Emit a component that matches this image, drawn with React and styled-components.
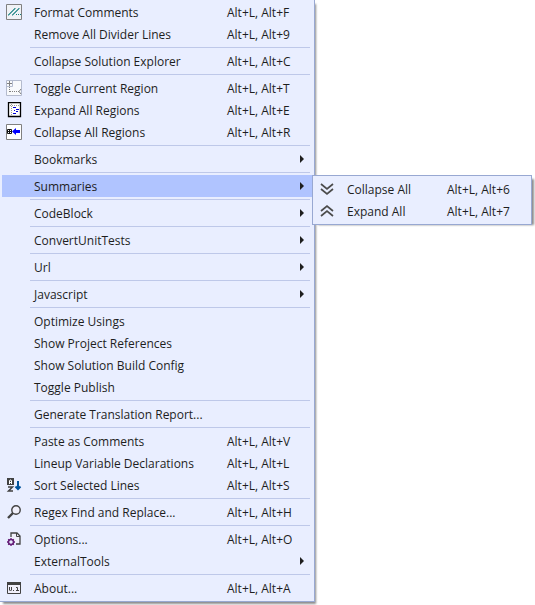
import React from "react";
import styled, { createGlobalStyle } from "styled-components";

const GlobalStyle = createGlobalStyle`
  * { box-sizing: border-box; }
  body {
    margin: 0;
    background: #fff;
    color: #1e1e1e;
    font: 12px/20px "Open Sans", "Noto Sans", sans-serif;
  }
`;

const Page = styled.main`
  display: flex;
  align-items: flex-start;
  min-height: 100vh;
`;

const Menu = styled.ul`
  display: grid;
  grid-template-columns: 34px minmax(193px, auto) 87px;
  margin: 0;
  padding: 1px 0 2px;
  list-style: none;
  background: #e9eeff;
  border: solid #98a8d2;
  border-width: 0 1px 1px 0;
  box-shadow: 2px 3px 2px -1px rgba(0, 0, 0, 0.45);
`;

const Submenu = styled(Menu)`
  position: absolute;
  z-index: 1;
  top: 0;
  left: calc(100% - 2px);
  grid-template-columns: 34px minmax(100px, auto) 84px;
  padding: 2px 0;
  border-width: 1px;
  box-shadow: 4px 2px 2px -2px rgba(0, 0, 0, 0.45);
`;

const Item = styled.li`
  position: relative;
  display: grid;
  grid-column: 1 / -1;
  grid-template-columns: subgrid;
`;

const Command = styled.button`
  display: grid;
  grid-column: 1 / -1;
  grid-template-columns: subgrid;
  align-items: center;
  height: 22px;
  padding: 0;
  border: 0;
  margin: 0 0 0 2px;
  background: ${(p) => (p.$active ? "#b0c4ff" : "transparent")};
  color: inherit;
  font: inherit;
  text-align: left;
  white-space: nowrap;
  cursor: default;

  &:hover { background: #b0c4ff; }
`;

const IconSlot = styled.span`
  display: flex;
  padding-left: 4px;
`;

const Label = styled.span`
  padding-top: 2px;
`;

const Arrow = styled.span`
  justify-self: end;
  margin-right: 10px;
  border: solid transparent;
  border-width: 4px 0 4px 4px;
  border-left-color: #1e1e1e;
`;

const Divider = styled.li`
  grid-column: 1 / -1;
  height: 1px;
  margin: 2px 4px 2px 30px;
  background: #bec8e9;
`;

const Drawing = styled.svg`
  display: block;
  width: 16px;
  height: 16px;
  fill: none;
`;

const drawings = {
  comments: (
    <>
      <path d="M.5.5h15v15H.5z" fill="#f0f2f6" stroke="#808080" />
      <path d="M2 11h1v-1h1V9h1V8h1V7h1V6h1V5h1V4M6 11h1v-1h1V9h1V8h1V7h1V6h1V5h1V4" stroke="#168080" />
      <path d="M10 10.500h1m1 0h1m1 0h1" stroke="#168080" />
    </>
  ),
  toggle: (
    <>
      <path d="M.5.5h15v15H.5z" fill="#f8f9fc" stroke="#b4bbce" />
      <path d="M1 6.500h5.500V1" stroke="#b4bbce" />
      <path d="M3.500 1v5M1 3.500h5" stroke="#808080" />
      <path d="M3.500 7v5M4 11.500h9" stroke="#808080" strokeDasharray="1 1" />
      <path d="M15 9l-2 2.500 2 2.500" stroke="#808080" />
    </>
  ),
  expand: (
    <>
      <path d="M2.500.5h12v14h-12z" fill="#fff" stroke="#000" strokeWidth="1.300" />
      <path d="M5.500 2v11M4 3.500h9" stroke="#999" strokeDasharray="1 1" />
      <path d="M7 5.500h3M10 7.500h3M8 8.500h1M10 9.500h2M7 11.500h3" stroke="#0000d8" />
    </>
  ),
  collapse: (
    <>
      <path d="M.5.5h15v15H.5z" fill="#fff" stroke="#808080" />
      <path d="M1.500 5.500h4v4h-4zM3.500 6v3M2 7.500h3" stroke="#111" />
      <path d="M6 7.500 10 4v2h4v3h-4v2z" fill="#00f" />
    </>
  ),
  sort: (
    <>
      <path d="M1 1h7v7H1z" fill="#424242" />
      <path d="M3.500 7V4L4 3h1l.5 1v3M3.500 5.500h2" stroke="#fff" />
      <path d="M2 10h4.500L2.500 14H7" stroke="#424242" strokeWidth="1.500" />
      <path d="M12 4v8M9.500 9.500 12 12l2.500-2.500" stroke="#00539c" strokeWidth="2" />
    </>
  ),
  search: (
    <>
      <circle cx="10" cy="6" r="4.200" fill="#f0effa" stroke="#424242" strokeWidth="1.400" />
      <path d="M7 9 2 14" stroke="#424242" strokeWidth="2.400" />
    </>
  ),
  options: (
    <>
      <path d="M5 6V2h6l3 3v8h-4" fill="#f0effa" stroke="#424242" strokeWidth="1.300" />
      <path d="M10.500 2v3.500H14" stroke="#424242" />
      <circle cx="5" cy="11" r="2.500" fill="#e9eeff" stroke="#68217a" strokeWidth="1.500" />
      <path d="M5 7v2M5 13v2M1 11h2M7 11h2M2.200 8.200l1.300 1.300M6.500 12.500l1.300 1.300M2.200 13.800l1.300-1.300M6.500 9.500l1.300-1.300" stroke="#68217a" strokeWidth="1.300" />
    </>
  ),
  about: (
    <>
      <path d="M1.500 2.500h13v11h-13z" fill="#f0effa" stroke="#424242" />
      <path d="M1 2h14v3H1z" fill="#424242" />
      <path d="M3.500 7v3l1 1 1-1V7M7 10.500h1M10 7.500h1.500V11M10 10.500h3" stroke="#424242" />
    </>
  ),
  down: <path d="m2 3 6 5 6-5M2 8l6 5 6-5" stroke="#4b4b4b" strokeWidth="1.700" />,
  up: <path d="m2 8 6-5 6 5M2 13l6-5 6 5" stroke="#4b4b4b" strokeWidth="1.700" />,
};

const summaries = [
  { label: "Collapse All", keys: "Alt+L, Alt+6", icon: "down" },
  { label: "Expand All", keys: "Alt+L, Alt+7", icon: "up" },
];

const groups = [
  [
    { label: "Format Comments", keys: "Alt+L, Alt+F", icon: "comments" },
    { label: "Remove All Divider Lines", keys: "Alt+L, Alt+9" },
  ],
  [{ label: "Collapse Solution Explorer", keys: "Alt+L, Alt+C" }],
  [
    { label: "Toggle Current Region", keys: "Alt+L, Alt+T", icon: "toggle" },
    { label: "Expand All Regions", keys: "Alt+L, Alt+E", icon: "expand" },
    { label: "Collapse All Regions", keys: "Alt+L, Alt+R", icon: "collapse" },
  ],
  [{ label: "Bookmarks", more: true }],
  [{ label: "Summaries", more: true, items: summaries }],
  [{ label: "CodeBlock", more: true }],
  [{ label: "ConvertUnitTests", more: true }],
  [{ label: "Url", more: true }],
  [{ label: "Javascript", more: true }],
  [
    { label: "Optimize Usings" },
    { label: "Show Project References" },
    { label: "Show Solution Build Config" },
    { label: "Toggle Publish" },
  ],
  [{ label: "Generate Translation Report..." }],
  [
    { label: "Paste as Comments", keys: "Alt+L, Alt+V" },
    { label: "Lineup Variable Declarations", keys: "Alt+L, Alt+L" },
    { label: "Sort Selected Lines", keys: "Alt+L, Alt+S", icon: "sort" },
  ],
  [{ label: "Regex Find and Replace...", keys: "Alt+L, Alt+H", icon: "search" }],
  [
    { label: "Options...", keys: "Alt+L, Alt+O", icon: "options" },
    { label: "ExternalTools", more: true },
  ],
  [{ label: "About...", keys: "Alt+L, Alt+A", icon: "about" }],
];

function MenuItem({ label, keys, icon, more, items }) {
  return (
    <Item role="none">
      <Command
        type="button"
        role="menuitem"
        $active={Boolean(items)}
        aria-haspopup={more ? "menu" : undefined}
        aria-expanded={more ? Boolean(items) : undefined}
      >
        <IconSlot>
          {icon && (
            <Drawing viewBox="0 0 16 16" aria-hidden="true">
              {drawings[icon]}
            </Drawing>
          )}
        </IconSlot>
        <Label>{label}</Label>
        {keys && <Label>{keys}</Label>}
        {more && <Arrow />}
      </Command>
      {items && (
        <Submenu role="menu" aria-label={label}>
          {items.map((item) => (
            <MenuItem key={item.label} {...item} />
          ))}
        </Submenu>
      )}
    </Item>
  );
}

export default function App() {
  return (
    <>
      <GlobalStyle />
      <Page>
        <Menu role="menu" aria-label="Commands">
          {groups.map((group, index) => (
            <React.Fragment key={group[0].label}>
              {index > 0 && <Divider role="separator" />}
              {group.map((item) => (
                <MenuItem key={item.label} {...item} />
              ))}
            </React.Fragment>
          ))}
        </Menu>
      </Page>
    </>
  );
}
